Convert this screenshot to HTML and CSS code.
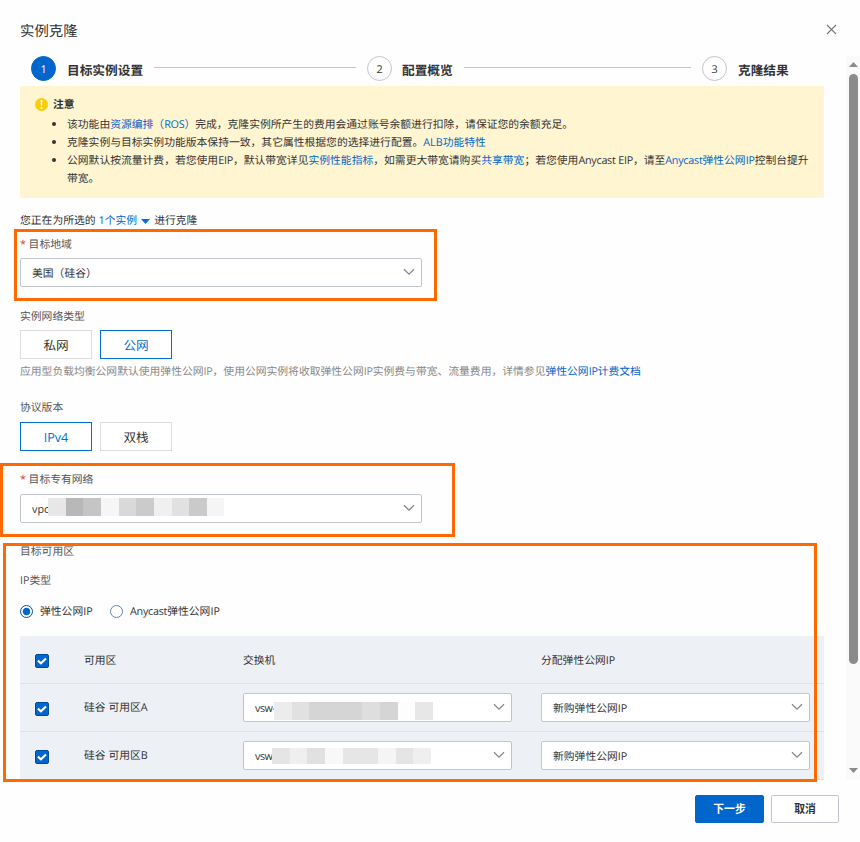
FILE: index.html
```
<!DOCTYPE html>
<html lang="zh-CN">
<head>
<meta charset="utf-8">
<title>实例克隆</title>
<link rel="stylesheet" href="styles.css">
</head>
<body>
<svg width="0" height="0" class="defs">
  <symbol id="chev" viewBox="0 0 12 8"><path d="M1 1.2 6 6.2 11 1.2" fill="none" stroke="#888" stroke-width="1.3"/></symbol>
  <symbol id="check" viewBox="0 0 12 12"><path d="M1.9 5.6 4.9 8.3 10 3.4" fill="none" stroke="#fff" stroke-width="2.1"/></symbol>
</svg>
<div class="dialog">
  <header class="head">
    <h1>实例克隆</h1>
    <svg class="close" width="11" height="11" viewBox="0 0 11 11"><path d="M1 1 10 10M10 1 1 10" stroke="#777" stroke-width="1.1" fill="none"/></svg>
  </header>
  <div class="middle">
    <main class="content">
      <div class="steps">
        <span class="num on">1</span><b class="t1">目标实例设置</b><i class="line l1"></i>
        <span class="num">2</span><b class="t2">配置概览</b><i class="line l2"></i>
        <span class="num">3</span><b class="t3">克隆结果</b>
      </div>
      <section class="notice">
        <div class="ntitle"><svg width="13" height="13" viewBox="0 0 13 13"><circle cx="6.5" cy="6.5" r="6.5" fill="#fc0"/><path d="M5.5 2h2l-.35 5.7h-1.3z" fill="#fff"/><circle cx="6.5" cy="9.9" r="1.1" fill="#fff"/></svg><b>注意</b></div>
        <ul>
          <li><span>该功能由<a>资源编排（<span class="n">ROS</span>）</a>完成，克隆实例所产生的费用会通过账号余额进行扣除，请保证您的余额充足。</span></li>
          <li><span>克隆实例与目标实例功能版本保持一致，其它属性根据您的选择进行配置。<a>ALB功能特性</a></span></li>
          <li><span>公网默认按流量计费，若您使用<span class="n">EIP</span>，默认带宽详见<a>实例性能指标</a>，如需更大带宽请购买<a>共享带宽</a>；若您使用<span class="n">Anycast EIP</span>，请至<a><span class="n">Anycast</span>弹性公网<span class="n">IP</span></a>控制台提升<br>带宽。</span></li>
        </ul>
      </section>
      <div class="chosen"><span>您正在为所选的</span><a>1个实例</a><svg width="9" height="5" viewBox="0 0 9 5"><path d="M0 0h9L4.5 5z" fill="#0070cc"/></svg><span>进行克隆</span></div>
      <div class="label region"><em>*</em>目标地域</div>
      <div class="select wide"><span>美国（硅谷）</span><svg class="chev"><use href="#chev"/></svg></div>
      <div class="label nettype">实例网络类型</div>
      <div class="options"><span class="opt">私网</span><span class="opt on">公网</span></div>
      <div class="help">应用型负载均衡公网默认使用弹性公网<span class="n">IP</span>，使用公网实例将收取弹性公网<span class="n">IP</span>实例费与带宽、流量费用，详情参见<a>弹性公网<span class="n">IP</span>计费文档</a></div>
      <div class="label proto">协议版本</div>
      <div class="options"><span class="opt on">IPv4</span><span class="opt">双栈</span></div>
      <div class="label vpc"><em>*</em>目标专有网络</div>
      <div class="select wide"><span>vpc</span>
        <div class="mask m1"></div><svg class="chev"><use href="#chev"/></svg></div>
      <div class="label zones">目标可用区</div>
      <div class="label iptype">IP类型</div>
      <div class="radios"><i class="radio on"></i><span class="r1">弹性公网IP</span><i class="radio"></i><span><span class="n">Anycast</span>弹性公网IP</span></div>
      <div class="table">
        <div class="row top"><svg class="cb"><use href="#check"/></svg><span>可用区</span><span>交换机</span><span>分配弹性公网IP</span></div>
        <div class="row"><svg class="cb"><use href="#check"/></svg><span>硅谷 可用区A</span>
          <div class="select"><span class="tight">vsw-</span><div class="mask m2"></div><svg class="chev"><use href="#chev"/></svg></div>
          <div class="select"><span>新购弹性公网IP</span><svg class="chev"><use href="#chev"/></svg></div></div>
        <div class="row"><svg class="cb"><use href="#check"/></svg><span>硅谷 可用区B</span>
          <div class="select"><span class="tight">vsw</span><div class="mask m3"></div><svg class="chev"><use href="#chev"/></svg></div>
          <div class="select"><span>新购弹性公网IP</span><svg class="chev"><use href="#chev"/></svg></div></div>
      </div>
    </main>
    <aside class="scroll"><svg width="9" height="5" viewBox="0 0 9 5"><path d="M0 5h9L4.5 0z" fill="#8b8b8b"/></svg><div class="thumb"></div><svg class="down" width="9" height="5" viewBox="0 0 9 5"><path d="M0 0h9L4.5 5z" fill="#8b8b8b"/></svg></aside>
  </div>
  <footer class="foot"><button class="primary">下一步</button><button>取消</button></footer>
  <div class="frame f1"></div><div class="frame f2"></div><div class="frame f3"></div>
</div>
</body>
</html>
```
FILE: styles.css
```
* { box-sizing: border-box; }
body { margin: 0; background: #fefefe; color: #333; font: 10.8px/18px "Open Sans", "Noto Sans CJK SC", sans-serif; text-rendering: geometricPrecision; }
a { color: #06c; }
i, em { font-style: normal; }
svg { flex: none; display: block; }
.defs { position: absolute; }
.n { letter-spacing: -0.26px; }
.tight { letter-spacing: -0.5px; }
.dialog { position: relative; width: 860px; height: 842px; overflow: hidden; white-space: nowrap; }
.head { height: 56px; padding: 21px 23px 0 20px; display: flex; justify-content: space-between; }
h1 { margin: 0; font-size: 14.4px; font-weight: 400; line-height: 22px; }
.close { margin-top: 3px; }
.middle { display: flex; justify-content: space-between; height: 724px; overflow: hidden; }
.content { width: 804px; margin-left: 20px; }

.steps { display: flex; height: 30px; padding-left: 11px; font-size: 12.7px; }
.num { flex: none; width: 25px; height: 25px; border: 1px solid #c0c6cc; border-radius: 50%; text-align: center; line-height: 25px; font-size: 10.8px; }
.num.on { background: #06c; border-color: #06c; color: #fff; }
.steps b { flex: none; margin-left: 11px; line-height: 28px; font-weight: 700; }
.t1 { width: 87px; } .t2 { width: 62px; }
.line { flex: none; height: 1px; margin: 11px 11px 0 0; background: #c0c6cc; }
.l1 { width: 202px; } .l2 { width: 227px; }
.steps .t2 { margin-left: 10px; }

.notice { height: 112px; padding: 10px 15px; background: #fff5d1; border-radius: 2px; }
.ntitle { display: flex; align-items: center; gap: 5px; height: 18px; }
.ntitle svg { margin-top: -2px; }
.ntitle b { font-weight: 700; }
ul { list-style: none; margin: 2px 0 0; padding: 0; }
li { display: flex; }
li::before { content: ""; flex: none; width: 4px; height: 4px; margin: 6px 11px 0 17px; border-radius: 50%; background: #333; }

.chosen { display: flex; align-items: center; height: 18px; margin-top: 14px; }
.chosen a { margin: 0 4px 0 3px; }
.chosen svg { margin-right: 4px; }
.label { height: 18px; color: #555; }
.label em { color: #d93026; display: inline-block; width: 8.6px; }
.region { margin-top: 6px; margin-bottom: 4px; }
.select { display: flex; align-items: center; width: 269px; height: 29px; padding: 0 6px 0 11px; border: 1px solid #c0c6cc; border-radius: 2px; background: #fff; }
.select > span { padding-top: 2px; }
.wide { width: 402px; }
.chev { width: 12px; height: 8px; margin-left: auto; margin-top: -1px; }
.nettype { margin-top: 21px; margin-bottom: 4px; }
.options { display: flex; gap: 8px; }
.opt { width: 72px; height: 29px; border: 1px solid #ddd; background: #fff; text-align: center; font-size: 12.6px; line-height: 29px; }
.opt.on { border-color: #0070cc; color: #0070cc; }
.help { height: 18px; margin-top: 4px; color: #888; }
.proto { margin-top: 18px; margin-bottom: 5px; }
.vpc { margin-top: 20px; margin-bottom: 5px; }
.zones { margin-top: 20px; }
.iptype { margin-top: 11px; }
.radios { display: flex; align-items: center; height: 18px; margin-top: 13px; }
.radio { width: 13px; height: 13px; margin: -1px 7px 0 0; border: 1px solid #5a85b4; border-radius: 50%; background: #fff; }
.radio.on { border-color: #06519b; background: radial-gradient(circle, #06c 3.3px, #fff 4.2px); }
.r1 { width: 70px; }

.table { margin-top: 15px; background: #edf1f6; }
.row { display: grid; grid-template-columns: 64px 159px 298px 269px; align-items: center; height: 48px; border-bottom: 1px solid #dde2e7; }
.row > span { padding-top: 1px; }
.cb { width: 14px; height: 14px; margin-left: 15px; margin-top: 3px; background: #06c; border: 1px solid #004b99; border-radius: 2px; }
.top > span { padding-top: 2px; }

.mask { align-self: flex-start; }
.m1 { width: 176px; height: 18px; margin-top: 3px; background: linear-gradient(90deg, #e7e7e7 18px, #b8b8b8 18px 35px, #c5c5c5 35px 53px, #f6f6f6 53px 71px, #d9d9d9 71px 88px, #cbcbcb 88px 106px, #f0f0f0 106px 124px, #e1e1e1 124px 141px, #cacaca 141px 159px, #f5f5f5 159px); }
.m2 { width: 159px; height: 18px; margin-top: 8px; background: linear-gradient(90deg, #ececec 18px, #e1e1e1 18px 35px, #d5d5d5 35px 88px, #dedede 88px 106px, #d5d5d5 106px 124px, #fdfdfd 124px 141px, #e7e7e7 141px); }
.m3 { width: 159px; height: 16px; margin-top: 6px; background: linear-gradient(90deg, #e5e5e5 18px, #efefef 18px 35px, #e1e1e1 35px 53px, #f8f8f8 53px 71px, #e6e6e6 71px 106px, #f5f5f5 106px 124px, #e5e5e5 124px 141px, #efefef 141px); }
.select > span:has(+ .mask) { width: 16px; }
.row .select > span:has(+ .m2) { width: 19px; }
.row .select > span:has(+ .m3) { width: 17px; }

.scroll { width: 14px; padding: 6px 2px 0 3px; background: #fafafa; }
.thumb { width: 9px; height: 590px; margin: 7px 0 104px; border-radius: 5px; background: #8b8b8b; }
.foot { display: flex; justify-content: flex-end; gap: 7px; padding: 15px 21px 0 0; }
button { width: 68px; height: 28px; padding: 0; border: 1px solid #c0c6cc; border-radius: 2px; background: #fff; color: #333; font: 700 10.8px/26px "Open Sans", "Noto Sans CJK SC", sans-serif; }
.primary { width: 69px; background: #06c; border-color: #06c; color: #fff; }
.frame { position: absolute; border: 3px solid #ff6a00; }
.f1 { left: 14px; top: 229px; width: 423px; height: 72px; }
.f2 { left: 0; top: 463px; width: 455px; height: 74px; }
.f3 { left: 3px; top: 543px; width: 814px; height: 239px; }
```
